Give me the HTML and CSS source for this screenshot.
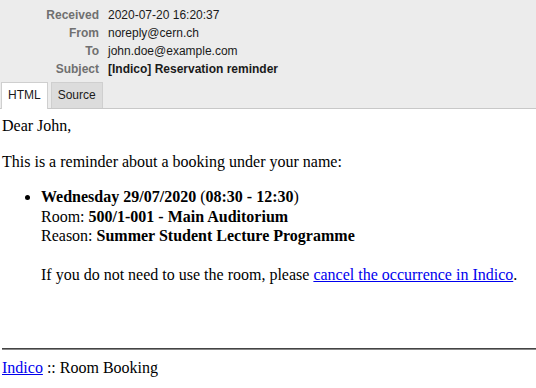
FILE: index.html
```html
<!DOCTYPE html>
<html>
  <head>
    <meta charset="utf-8" />
    <title>[Indico] Reservation reminder</title>
    <link rel="stylesheet" href="styles.css">
  </head>
  <body>
    <div id="mail_head">
      <table class="fields">
        <tr><th>Received</th><td>2020-07-20 16:20:37</td></tr>
        <tr><th>From</th><td>noreply@cern.ch</td></tr>
        <tr><th>To</th><td>john.doe@example.com</td></tr>
        <tr><th>Subject</th><td class="subject">[Indico] Reservation reminder</td></tr>
      </table>
      <div class="tabs">
        <span class="tab active">HTML</span>
        <span class="tab">Source</span>
      </div>
    </div>

    <div id="mail_body">
      <p>Dear John,</p>
      <p>This is a reminder about a booking under your name:</p>
      <ul>
        <li>
          <strong>Wednesday 29/07/2020</strong> (<strong>08:30 - 12:30</strong>)<br>
          Room: <strong>500/1-001 - Main Auditorium</strong><br>
          Reason: <strong>Summer Student Lecture Programme</strong><br>
          <br>
          If you do not need to use the room, please <a href="#">cancel the occurrence in Indico</a>.
        </li>
      </ul>
      <br>
      <br>
      <hr>
      <a href="#">Indico</a> :: Room Booking
    </div>
  </body>
</html>
```

FILE: styles.css
```css
html, body
{
  margin: 0;
  padding: 0;
  background-color: #fff;
}
#mail_head
{
  background-color: #ececec;
  font-family: "Liberation Sans", Arial, sans-serif;
  font-size: 12px;
  padding-top: 6px;
  border-bottom: 1px solid #c8c8c8;
}
.fields
{
  border-collapse: collapse;
}
.fields th
{
  width: 108px;
  padding: 0 9px 0 0;
  text-align: right;
  color: #707070;
  font-weight: bold;
  line-height: 18px;
  box-sizing: border-box;
}
.fields td
{
  padding: 0;
  color: #1a1a1a;
  line-height: 18px;
}
.fields .subject
{
  font-weight: bold;
}
.tabs
{
  display: flex;
  gap: 3px;
  padding: 4px 0 0 1px;
}
.tab
{
  display: block;
  padding: 0 6px;
  height: 25px;
  line-height: 25px;
  border: 1px solid #cfcfcf;
  border-bottom: none;
  background-color: #dcdcdc;
  color: #1a1a1a;
  margin-bottom: -1px;
}
.tab.active
{
  background-color: #fff;
  height: 26px;
}
#mail_body
{
  padding: 0 2px;
  font-family: "Liberation Serif", "Times New Roman", serif;
  font-size: 16px;
  line-height: 19.5px;
  color: #000;
}
#mail_body p
{
  margin: 0 0 16px 0;
}
#mail_body p:first-child
{
  margin-top: 7px;
}
#mail_body ul
{
  margin: 0 0 16px 0;
  padding-left: 39px;
}
#mail_body hr
{
  margin: 8px -2px 8px 0;
  border: none;
  border-top: 1px solid #444;
  border-bottom: 1px solid #888;
}
a
{
  color: #00e;
}
```
